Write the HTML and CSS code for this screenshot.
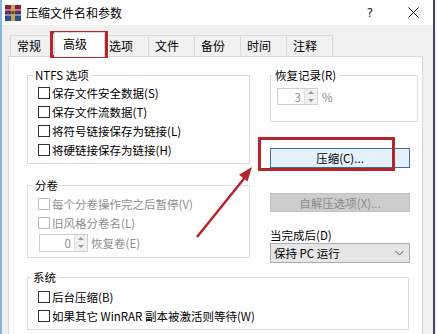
FILE: index.html
```html
<!DOCTYPE html>
<html lang="zh-CN">
<head>
<meta charset="utf-8">
<title>压缩文件名和参数</title>
<link rel="stylesheet" href="styles.css">
</head>
<body>
<div class="window">
  <div class="titlebar">
    <svg class="app-icon" width="16" height="16" viewBox="0 0 16 16">
      <rect x="0" y="0" width="16" height="5" fill="#8c1d3f"/>
      <rect x="0" y="5" width="16" height="5" fill="#5b2a6e"/>
      <rect x="0" y="10" width="16" height="6" fill="#2a4f8c"/>
      <rect x="0" y="4.5" width="16" height="1" fill="#e8e0d0"/>
      <rect x="0" y="9.5" width="16" height="1" fill="#e8e0d0"/>
      <rect x="6" y="0" width="4" height="16" fill="#c9a55c"/>
      <rect x="6.5" y="6" width="3" height="3" fill="#6b4a1e"/>
    </svg>
    <span class="title">压缩文件名和参数</span>
    <span class="tb-btn tb-help">?</span>
    <span class="tb-btn tb-close">
      <svg width="11" height="11" viewBox="0 0 11 11"><path d="M0.5 0.5 L10.5 10.5 M10.5 0.5 L0.5 10.5" stroke="#111" stroke-width="1" fill="none"/></svg>
    </span>
  </div>

  <div class="tabs">
    <div class="tab">常规</div>
    <div class="tab tab-active">高级</div>
    <div class="tab">选项</div>
    <div class="tab">文件</div>
    <div class="tab">备份</div>
    <div class="tab">时间</div>
    <div class="tab">注释</div>
  </div>

  <div class="panel">
    <div class="main">
      <div class="col-left">
        <fieldset class="group group-ntfs">
          <legend>NTFS 选项</legend>
          <div class="check"><span class="box"></span>保存文件安全数据(S)</div>
          <div class="check"><span class="box"></span>保存文件流数据(T)</div>
          <div class="check"><span class="box"></span>将符号链接保存为链接(L)</div>
          <div class="check"><span class="box"></span>将硬链接保存为链接(H)</div>
        </fieldset>
        <fieldset class="group group-vol">
          <legend>分卷</legend>
          <div class="check disabled"><span class="box"></span>每个分卷操作完之后暂停(V)</div>
          <div class="check disabled"><span class="box"></span>旧风格分卷名(L)</div>
          <div class="spin-row">
            <div class="spin spin-vol">
              <span class="spin-val">0</span>
              <span class="spin-arrows"><span class="arr-up"></span><span class="arr-down"></span></span>
            </div>
            <span class="dim">恢复卷(E)</span>
          </div>
        </fieldset>
      </div>

      <div class="col-right">
        <fieldset class="group group-rec">
          <legend>恢复记录(R)</legend>
          <div class="spin-row rec-row">
            <div class="spin spin-rec">
              <span class="spin-val">3</span>
              <span class="spin-arrows"><span class="arr-up"></span><span class="arr-down"></span></span>
            </div>
            <span class="dim pct">%</span>
          </div>
        </fieldset>
        <div class="btn btn-main">压缩(C)...</div>
        <div class="btn btn-disabled">自解压选项(X)...</div>
        <div class="field-label">当完成后(D)</div>
        <div class="select">
          <span>保持 PC 运行</span>
          <svg width="9" height="6" viewBox="0 0 9 6"><path d="M0.5 1 L4.5 5 L8.5 1" stroke="#555" stroke-width="1" fill="none"/></svg>
        </div>
      </div>
    </div>

    <fieldset class="group group-sys">
      <legend>系统</legend>
      <div class="check"><span class="box"></span>后台压缩(B)</div>
      <div class="check"><span class="box"></span>如果其它 WinRAR 副本被激活则等待(W)</div>
    </fieldset>
  </div>
</div>

<svg class="annot" width="437" height="334" viewBox="0 0 437 334">
  <rect x="51.5" y="32.5" width="55" height="24" fill="none" stroke="#b3262c" stroke-width="3"/>
  <rect x="259.5" y="138.5" width="134" height="31" fill="none" stroke="#b3262c" stroke-width="3"/>
  <line x1="197" y1="237" x2="244.5" y2="178" stroke="#b3262c" stroke-width="2.5"/>
  <polygon points="252,167 247.5,181.5 239,174.8" fill="#b3262c"/>
</svg>
</body>
</html>
```

FILE: styles.css
```css
html, body {
  margin: 0;
  padding: 0;
}
body {
  position: relative;
  width: 437px;
  height: 334px;
  overflow: hidden;
  background: #f4f6f8;
  font-family: "Noto Sans CJK SC", "Noto Sans", sans-serif;
  font-size: 11.5px;
  color: #000;
}
.window {
  width: 431px;
  height: 334px;
  border-left: 2px solid #86b6dc;
  border-right: 2px solid #3b4a5c;
  background: #f0f0f0;
  overflow: hidden;
}
.titlebar {
  height: 25px;
  background: #fff;
  display: flex;
  align-items: center;
  padding: 0 8px 0 3px;
}
.app-icon {
  flex: none;
}
.title {
  margin-left: 5px;
  font-size: 12px;
  line-height: 16px;
}
.tb-btn {
  width: 24px;
  height: 25px;
  display: flex;
  align-items: center;
  justify-content: center;
}
.tb-help {
  margin-left: auto;
  font-family: "DejaVu Sans", sans-serif;
  font-size: 12px;
  color: #222;
}
.tb-close {
  margin-left: 19px;
}
.tabs {
  display: flex;
  align-items: flex-end;
  padding: 7px 0 0 9px;
}
.tab {
  box-sizing: border-box;
  width: 47px;
  height: 21px;
  margin-left: -1px;
  padding-left: 6px;
  border: 1px solid #d9d9d9;
  border-bottom: none;
  background: #f0f0f0;
  font-size: 12px;
  line-height: 19px;
}
.tab-active {
  position: relative;
  z-index: 1;
  width: 51px;
  height: 25px;
  margin: 0 -2px -1px -3px;
  padding-left: 8px;
  background: #fff;
  line-height: 21px;
}
.panel {
  box-sizing: border-box;
  width: 415px;
  height: 290px;
  margin-left: 6px;
  padding: 10px 0 0 18px;
  background: #fff;
  border: 1px solid #d9d9d9;
}
.main {
  display: flex;
  align-items: flex-start;
  gap: 20px;
}
.col-left {
  width: 223px;
  display: flex;
  flex-direction: column;
  gap: 13px;
}
.col-right {
  width: 148px;
  display: flex;
  flex-direction: column;
}
.group {
  box-sizing: border-box;
  margin: 0;
  min-width: 0;
  padding: 0 6px 4px 10px;
  border: 1px solid #dcdcdc;
}
.group legend {
  padding: 0 2px;
  margin-left: -5px;
  line-height: 16px;
}
.group-vol {
  padding-top: 1px;
  padding-bottom: 4px;
}
.group-rec {
  padding: 0 6px 16px 6px;
}
.group-rec legend {
  margin-left: -4px;
}
.group-sys {
  width: 382px;
  margin-top: 6px;
  padding-top: 2px;
  padding-bottom: 4px;
}
.group-sys legend {
  margin-left: -7px;
}
.check {
  display: flex;
  align-items: center;
  gap: 2px;
  height: 19px;
  white-space: nowrap;
}
.box {
  box-sizing: border-box;
  width: 12px;
  height: 12px;
  border: 1px solid #333;
  background: #fff;
  flex: none;
}
.check.disabled {
  color: #8e8e8e;
}
.check.disabled .box {
  border-color: #bcbcbc;
}
.dim {
  color: #8e8e8e;
}
.spin-row {
  display: flex;
  align-items: center;
  height: 21px;
  gap: 3px;
}
.rec-row {
  margin-top: 5px;
  height: 17px;
}
.spin {
  box-sizing: border-box;
  display: flex;
  height: 18px;
  border: 1px solid #cfcfcf;
  background: #fff;
}
.spin-vol {
  width: 49px;
  margin-left: 1px;
}
.spin-rec {
  width: 41px;
  height: 17px;
}
.spin-val {
  flex: 1;
  text-align: right;
  padding-right: 3px;
  color: #8e8e8e;
  line-height: 16px;
}
.spin-arrows {
  width: 12px;
  display: flex;
  flex-direction: column;
  background: #f0f0f0;
  border-left: 1px solid #e0e0e0;
}
.arr-up, .arr-down {
  flex: 1;
  position: relative;
  display: flex;
  align-items: center;
  justify-content: center;
}
.arr-up::before, .arr-down::before {
  content: "";
  width: 0;
  height: 0;
  border-left: 3px solid transparent;
  border-right: 3px solid transparent;
}
.arr-up::before {
  border-bottom: 3px solid #9a9a9a;
}
.arr-down::before {
  border-top: 3px solid #9a9a9a;
}
.pct {
  margin-left: 1px;
}
.btn {
  box-sizing: border-box;
  width: 140px;
  height: 20px;
  display: flex;
  align-items: center;
  justify-content: center;
  white-space: nowrap;
}
.btn-main {
  margin-top: 26px;
  background: #e5f1fb;
  border: 1px solid #3c6f9c;
}
.btn-disabled {
  margin-top: 25px;
  height: 19px;
  background: #cccccc;
  border: 1px solid #c2c2c2;
  color: #8a8a8a;
}
.field-label {
  margin-top: 15px;
  line-height: 16px;
}
.select {
  box-sizing: border-box;
  width: 140px;
  height: 20px;
  margin-top: 0;
  padding: 0 5px 0 3px;
  display: flex;
  align-items: center;
  justify-content: space-between;
  background: #e6e6e6;
  border: 1px solid #adadad;
}
.annot {
  position: absolute;
  left: 0;
  top: 0;
  pointer-events: none;
}
```
